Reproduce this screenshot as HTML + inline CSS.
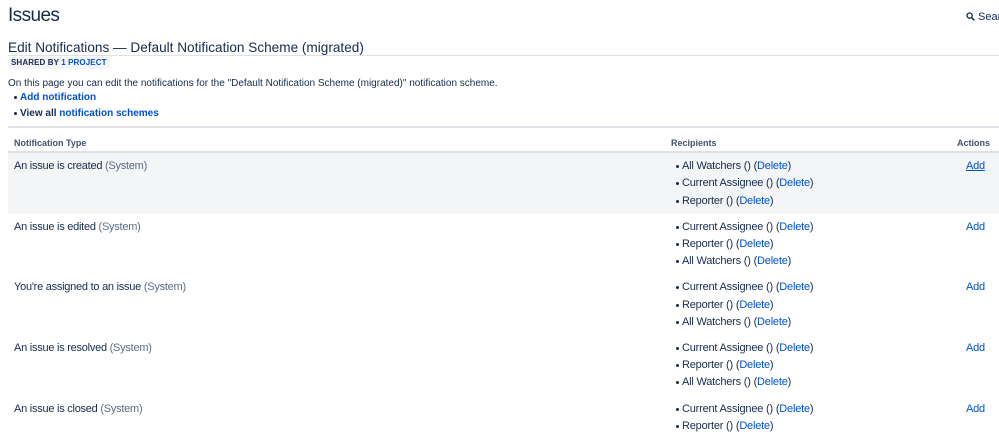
<!DOCTYPE html>
<html><head><meta charset="utf-8"><style>
*{margin:0;padding:0;box-sizing:border-box}
body{width:999px;height:439px;overflow:hidden;background:#fff;font-family:"Liberation Sans",Arial,sans-serif;color:#172b4d;position:relative}
.a{position:absolute;white-space:nowrap}
.l{color:#0052cc}
.g{color:#5e6c84}
.b{font-weight:bold}
.row{position:absolute;left:8px;width:991px;height:61px}
.t{font-size:11px;line-height:13px;letter-spacing:-0.25px}
.li{font-size:11px;line-height:13px;letter-spacing:-0.2px}
.li:before{content:"";position:absolute;left:-6px;top:5px;width:3px;height:3px;border-radius:50%;background:#172b4d}
.h{font-size:9px;line-height:12px;font-weight:bold;color:#42526e}
</style></head><body>
<div class="a" style="left:8px;top:5px;font-size:19px;line-height:22px;letter-spacing:-0.6px">Issues</div>
<div class="a" style="left:966px;top:11px;font-size:11px;line-height:13px">
<svg width="9" height="9" viewBox="0 0 9 9" style="vertical-align:-1px"><circle cx="3.6" cy="3.6" r="2.6" fill="none" stroke="#172b4d" stroke-width="1.3"/><path d="M5.6 5.6L8.3 8.3" stroke="#172b4d" stroke-width="1.5"/></svg> Search</div>
<div class="a" style="left:8px;top:39px;font-size:13.6px;line-height:17px">Edit Notifications — Default Notification Scheme (migrated)</div>
<div class="a" style="left:8px;top:55px;width:991px;height:1px;background:#dfe1e6"></div>
<div class="a b" style="left:8px;top:57px;height:12px;padding:0 3px;background:#f4f5f7;border-radius:3px;font-size:8px;line-height:12px;letter-spacing:0.1px">SHARED BY <span class="l">1 PROJECT</span></div>
<div class="a" style="left:8px;top:77px;font-size:10px;line-height:13px">On this page you can edit the notifications for the "Default Notification Scheme (migrated)" notification scheme.</div>
<div class="a li b" style="left:20px;top:91px;font-size:10px;letter-spacing:0"><span class="l">Add notification</span></div>
<div class="a li b" style="left:20px;top:107px;font-size:10px;letter-spacing:0">View all <span class="l">notification schemes</span></div>
<div class="a" style="left:8px;top:126px;width:991px;height:2px;background:#dfe1e6"></div>
<div class="a h" style="left:14px;top:137px">Notification Type</div>
<div class="a h" style="left:671px;top:137px">Recipients</div>
<div class="a h" style="left:957px;top:137px">Actions</div>
<div class="a" style="left:8px;top:151px;width:991px;height:2px;background:#dfe1e6"></div>
<div class="row" style="top:153px;background:#f4f5f7"></div>

<div class="a t" style="left:14px;top:160px">An issue is created <span class="g">(System)</span></div>
<div class="a li" style="left:682px;top:160px">All Watchers () (<span class="l">Delete</span>)</div>
<div class="a li" style="left:682px;top:177px">Current Assignee () (<span class="l">Delete</span>)</div>
<div class="a li" style="left:682px;top:195px">Reporter () (<span class="l">Delete</span>)</div>
<div class="a t l" style="left:966px;top:160px;text-decoration:underline">Add</div>

<div class="a t" style="left:14px;top:221px">An issue is edited <span class="g">(System)</span></div>
<div class="a li" style="left:682px;top:221px">Current Assignee () (<span class="l">Delete</span>)</div>
<div class="a li" style="left:682px;top:238px">Reporter () (<span class="l">Delete</span>)</div>
<div class="a li" style="left:682px;top:255px">All Watchers () (<span class="l">Delete</span>)</div>
<div class="a t l" style="left:966px;top:221px">Add</div>

<div class="a t" style="left:14px;top:281px">You're assigned to an issue <span class="g">(System)</span></div>
<div class="a li" style="left:682px;top:281px">Current Assignee () (<span class="l">Delete</span>)</div>
<div class="a li" style="left:682px;top:299px">Reporter () (<span class="l">Delete</span>)</div>
<div class="a li" style="left:682px;top:316px">All Watchers () (<span class="l">Delete</span>)</div>
<div class="a t l" style="left:966px;top:281px">Add</div>

<div class="a t" style="left:14px;top:342px">An issue is resolved <span class="g">(System)</span></div>
<div class="a li" style="left:682px;top:342px">Current Assignee () (<span class="l">Delete</span>)</div>
<div class="a li" style="left:682px;top:359px">Reporter () (<span class="l">Delete</span>)</div>
<div class="a li" style="left:682px;top:376px">All Watchers () (<span class="l">Delete</span>)</div>
<div class="a t l" style="left:966px;top:342px">Add</div>

<div class="a t" style="left:14px;top:403px">An issue is closed <span class="g">(System)</span></div>
<div class="a li" style="left:682px;top:403px">Current Assignee () (<span class="l">Delete</span>)</div>
<div class="a li" style="left:682px;top:420px">Reporter () (<span class="l">Delete</span>)</div>
<div class="a t l" style="left:966px;top:403px">Add</div>
</body></html>
